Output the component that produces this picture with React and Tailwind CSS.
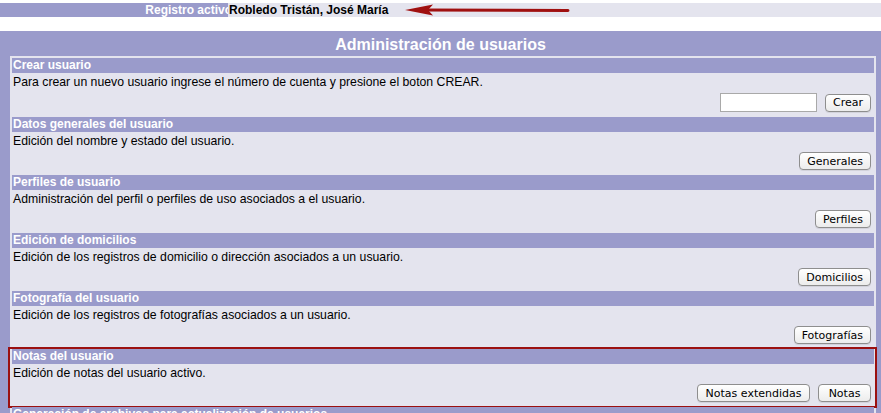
import React from 'react';

const sections = [
  {
    title: 'Crear usuario',
    text: 'Para crear un nuevo usuario ingrese el número de cuenta y presione el boton CREAR.',
    input: true,
    buttons: ['Crear'],
  },
  { title: 'Datos generales del usuario', text: 'Edición del nombre y estado del usuario.', buttons: ['Generales'] },
  { title: 'Perfiles de usuario', text: 'Administración del perfil o perfiles de uso asociados a el usuario.', buttons: ['Perfiles'] },
  { title: 'Edición de domicilios', text: 'Edición de los registros de domicilio o dirección asociados a un usuario.', buttons: ['Domicilios'] },
  { title: 'Fotografía del usuario', text: 'Edición de los registros de fotografías asociados a un usuario.', buttons: ['Fotografías'] },
  {
    title: 'Notas del usuario',
    text: 'Edición de notas del usuario activo.',
    buttons: ['Notas extendidas', 'Notas'],
    marked: true,
  },
  { title: 'Generación de archivos para actualización de usuarios', text: '', buttons: [] },
];

function MacButton({ label }) {
  return (
    <button
      className={`h-[18px] px-[7px] rounded-[4px] border border-[#8e8e8e] bg-gradient-to-b from-white to-[#ececec] text-[11px] leading-none text-black font-['DejaVu_Sans',sans-serif] shadow-[0_1px_0_rgba(0,0,0,0.08)] ${
        label === 'Notas' ? 'w-[53px]' : label === 'Notas extendidas' ? 'w-[113px]' : ''
      }`}
    >
      {label}
    </button>
  );
}

function Section({ s }) {
  return (
    <div className="relative pb-[3px]">
      {/* header */}
      <div className="h-[15px] bg-[#9a9bcb] pl-[1px] text-[12px] leading-[15px] font-bold text-white whitespace-nowrap">
        {s.title}
      </div>
      <div className="h-[18px] pl-[1px] text-[12.25px] leading-[19px] text-black">{s.text}</div>
      <div className={`${s.input ? 'h-[23px]' : 'h-[22px]'} flex items-center justify-end gap-[8px] pr-[3px]`}>
        {s.input && <input className="w-[97px] h-[19px] bg-white border border-[#a9a9a9] outline-none" />}
        {s.buttons.map((b) => (
          <MacButton key={b} label={b} />
        ))}
      </div>
      {/* red annotation box */}
      {s.marked && (
        <div className="absolute -top-[2px] -left-[4px] -right-[3px] bottom-[-1px] border-2 border-[#9b1010] pointer-events-none" />
      )}
    </div>
  );
}

export default function App() {
  return (
    <div className="w-[881px] h-[413px] overflow-hidden bg-white font-['Liberation_Sans',Arial,sans-serif]">
      {/* Active record bar */}
      <div className="mt-[3px] h-[14px] flex">
        <div className="w-[228px] bg-[#9a9bcb] overflow-hidden flex justify-end">
          <span className="mr-[-4px] text-[12px] leading-[14px] font-bold text-white whitespace-nowrap">
            Registro activo
          </span>
        </div>
        <div className="flex-1 bg-[#e4e4ee] flex items-center">
          <span className="pl-[1px] text-[12px] leading-[14px] font-bold text-black whitespace-nowrap">
            Robledo Tristán, José María
          </span>
          <svg width="165" height="12" viewBox="0 0 165 12" className="ml-[17px]">
            <line x1="20" y1="6" x2="163" y2="6.5" stroke="#a01010" strokeWidth="3" strokeLinecap="round" />
            <polygon points="0,6 28,0.5 23,6 28,11.5" fill="#a01010" />
          </svg>
        </div>
      </div>

      {/* Main panel */}
      <div className="mt-[14px] bg-[#9a9bcb] pb-[8px]">
        <div className="h-[25px] text-center text-[16px] leading-[27px] font-bold text-white">
          Administración de usuarios
        </div>
        <div className="ml-[10px] mr-[5px] bg-[#e4e4ee] p-[2px]">
          {sections.map((s) => (
            <Section key={s.title} s={s} />
          ))}
        </div>
      </div>
    </div>
  );
}
